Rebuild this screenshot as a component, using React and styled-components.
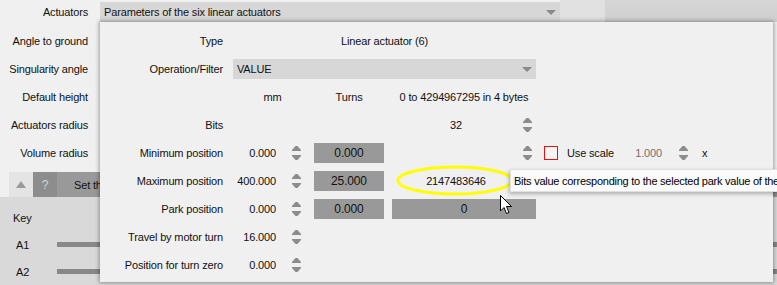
import React from "react";
import styled, { createGlobalStyle } from "styled-components";

const GlobalStyle = createGlobalStyle`
  body {
    margin: 0;
    background: #f0f0f0;
    font-family: "Liberation Sans", Arial, sans-serif;
    font-size: 11px;
    letter-spacing: -0.15px;
    color: #111;
  }
`;

const Screen = styled.div`
  position: relative;
  width: 777px;
  height: 285px;
  overflow: hidden;
  background: #f0f0f0;
`;

// ---- background form ----

const Form = styled.div`
  display: flex;
  flex-direction: column;
  height: 100%;
`;

const TopRow = styled.div`
  display: flex;
  height: 22px;
  margin-bottom: 5px;
`;

const FormRow = styled.div`
  display: flex;
  align-items: center;
  height: 28px;
`;

const FormLabel = styled.div`
  width: 88px;
  padding-right: 12px;
  text-align: right;
  white-space: nowrap;
  align-self: center;
  margin-top: ${(p) => (p.$top ? "2px" : "0")};
`;

const Combo = styled.div`
  display: flex;
  align-items: center;
  justify-content: space-between;
  width: ${(p) => p.$width}px;
  height: 20px;
  padding: 0 4px;
  box-sizing: border-box;
  background: #d7d7d7;
  align-self: ${(p) => (p.$top ? "flex-end" : "center")};
  grid-column: ${(p) => p.$span || "auto"};
`;

const Strip = styled.div`
  width: ${(p) => (p.$width ? `${p.$width}px` : "auto")};
  flex: ${(p) => (p.$width ? "none" : "1")};
  background: ${(p) => p.$bg};
`;

const Toolbar = styled.div`
  display: flex;
  height: 25px;
  margin-top: 5px;
  padding-left: 9px;
`;

const ToolButton = styled.div`
  display: flex;
  align-items: center;
  justify-content: ${(p) => (p.$wide ? "flex-start" : "center")};
  width: ${(p) => (p.$wide ? "auto" : "24px")};
  flex: ${(p) => (p.$wide ? "1" : "none")};
  padding-left: ${(p) => (p.$wide ? "17px" : "0")};
  background: ${(p) => p.$bg};
  color: ${(p) => p.$fg || "#111"};
  font-size: ${(p) => (p.$wide ? "11px" : "12px")};
`;

const KeyPanel = styled.div`
  flex: 1;
  background: #d9d9d9;
  padding-top: 7px;
`;

const KeyRow = styled.div`
  display: flex;
  align-items: center;
  height: 27px;
  padding-left: ${(p) => (p.$indent ? "16px" : "13px")};
`;

const KeyName = styled.span`
  width: 41px;
`;

const KeyLine = styled.div`
  flex: 1;
  height: 5px;
  background: #888;
`;

// ---- popup ----

const Popup = styled.div`
  position: absolute;
  left: 100px;
  top: 22px;
  width: 673px;
  height: 260px;
  background: #f0f0f0;
  box-shadow: 0 0 4px 1px rgba(0, 0, 0, 0.35);
  padding-top: 5px;
  box-sizing: border-box;
`;

const Grid = styled.div`
  display: grid;
  grid-template-columns: 125px 73px 70px 144px 1fr;
  grid-auto-rows: 28px;
  column-gap: 8px;
  align-items: center;
`;

const Label = styled.div`
  grid-column: 1;
  text-align: right;
  padding-right: 2px;
  white-space: nowrap;
`;

const Centered = styled.div`
  grid-column: ${(p) => p.$span || "auto"};
  text-align: center;
  white-space: nowrap;
  padding-left: ${(p) => p.$pl || 0}px;
`;

const NumField = styled.div`
  display: flex;
  align-items: center;
`;

const NumValue = styled.span`
  width: ${(p) => p.$width || 43}px;
  text-align: ${(p) => p.$align || "right"};
  color: ${(p) => (p.$muted ? "#707070" : "inherit")};
`;

const GrayBox = styled.div`
  height: 20px;
  display: flex;
  align-items: center;
  justify-content: center;
  background: #999;
  color: #111;
  font-size: 12px;
`;

const Cell = styled.div`
  display: flex;
  align-items: center;
  justify-content: ${(p) => p.$justify || "flex-start"};
  padding-right: ${(p) => p.$pr || 0}px;
`;

const Check = styled.div`
  width: 12px;
  height: 12px;
  border: 1px solid #e81010;
  background: #f4f4f4;
  margin-right: 9px;
`;

const Tooltip = styled.div`
  position: absolute;
  left: 510px;
  top: 169px;
  height: 21px;
  padding: 0 3px;
  display: flex;
  align-items: center;
  background: #fbfbfb;
  border: 1px solid #e0e0e0;
  box-shadow: -1px 2px 4px rgba(0, 0, 0, 0.28);
  white-space: nowrap;
  color: #000;
  letter-spacing: -0.25px;
`;

const Overlay = styled.svg`
  position: absolute;
  left: ${(p) => p.$x}px;
  top: ${(p) => p.$y}px;
  pointer-events: none;
`;

const Spin = ({ ml = 0 }) => (
  <svg width="9" height="14" viewBox="0 0 9 14" style={{ marginLeft: ml, flex: "none" }}>
    <polygon points="3.5,0 5.5,0 9,4 9,5 0,5 0,4" fill="#8c8c8c" />
    <polygon points="0,9 9,9 9,10 5.5,14 3.5,14 0,10" fill="#8c8c8c" />
  </svg>
);

const Arrow = () => (
  <svg width="10" height="5" viewBox="0 0 10 5">
    <polygon points="0,0 10,0 5,5" fill="#8a8a8a" />
  </svg>
);

const Number = ({ value }) => (
  <NumField>
    <NumValue>{value}</NumValue>
    <Spin ml={16} />
  </NumField>
);

const rows = [
  ["Minimum position", "0.000"],
  ["Maximum position", "400.000"],
  ["Park position", "0.000"],
  ["Travel by motor turn", "16.000"],
  ["Position for turn zero", "0.000"],
];

export default function App() {
  return (
    <Screen>
      <GlobalStyle />
      <Form>
        <TopRow>
          <FormLabel $top>Actuators</FormLabel>
          <Combo $width={460} $top>
            <span>Parameters of the six linear actuators</span>
            <Arrow />
          </Combo>
          <Strip $width={45} $bg="#e1e1e1" />
          <Strip $bg="linear-gradient(#d6d6d6, #cfcfcf)" />
        </TopRow>
        {["Angle to ground", "Singularity angle", "Default height", "Actuators radius", "Volume radius"].map(
          (l) => (
            <FormRow key={l}>
              <FormLabel>{l}</FormLabel>
            </FormRow>
          )
        )}
        <Toolbar>
          <ToolButton $bg="#e4e4e4" $fg="#9a9a9a">
            <svg width="10" height="7" viewBox="0 0 10 7">
              <polygon points="5,0 10,7 0,7" fill="#9a9a9a" />
            </svg>
          </ToolButton>
          <ToolButton $bg="#8d8d8d" $fg="#d4d4d4">?</ToolButton>
          <ToolButton $bg="#999" $wide>Set the</ToolButton>
        </Toolbar>
        <KeyPanel>
          <KeyRow>Key</KeyRow>
          <KeyRow $indent>
            <KeyName>A1</KeyName>
            <KeyLine />
          </KeyRow>
          <KeyRow $indent>
            <KeyName>A2</KeyName>
            <KeyLine />
          </KeyRow>
        </KeyPanel>
      </Form>

      <Popup>
        <Grid>
          <Label>Type</Label>
          <Centered $span="2 / 5">Linear actuator (6)</Centered>
          <div />

          <Label>Operation/Filter</Label>
          <Combo $span="2 / 5">
            <span>VALUE</span>
            <Arrow />
          </Combo>
          <div />

          <Label />
          <Centered $pl={6}>mm</Centered>
          <Centered>Turns</Centered>
          <Centered>0 to 4294967295 in 4 bytes</Centered>
          <div />

          <Label>Bits</Label>
          <div />
          <div />
          <Cell>
            <NumValue $width={128} $align="center">32</NumValue>
            <Spin ml={3} />
          </Cell>
          <div />

          <Label>{rows[0][0]}</Label>
          <Number value={rows[0][1]} />
          <GrayBox>0.000</GrayBox>
          <Cell $justify="flex-end" $pr={4}>
            <Spin />
          </Cell>
          <Cell>
            <Check />
            <NumValue $width={60} $align="left">Use scale</NumValue>
            <NumValue $width={35} $muted>1.000</NumValue>
            <Spin ml={17} />
            <span style={{ marginLeft: 14 }}>x</span>
          </Cell>

          <Label>{rows[1][0]}</Label>
          <Number value={rows[1][1]} />
          <GrayBox>25.000</GrayBox>
          <Cell>
            <NumValue $width={128} $align="center">2147483646</NumValue>
          </Cell>
          <div />

          <Label>{rows[2][0]}</Label>
          <Number value={rows[2][1]} />
          <GrayBox>0.000</GrayBox>
          <GrayBox>0</GrayBox>
          <div />

          <Label>{rows[3][0]}</Label>
          <Number value={rows[3][1]} />
          <div />
          <div />
          <div />

          <Label>{rows[4][0]}</Label>
          <Number value={rows[4][1]} />
        </Grid>
      </Popup>

      <Overlay $x={396} $y={165} width="118" height="31" viewBox="0 0 118 31">
        <ellipse cx="59" cy="15.5" rx="57" ry="13.5" fill="none" stroke="#ffff00" strokeWidth="3" />
      </Overlay>

      <Tooltip>Bits value corresponding to the selected park value of the actuator</Tooltip>

      <Overlay $x={500} $y={195} width="13" height="20" viewBox="0 0 13 20">
        <path d="M0.5 0.5 L0.5 16 L4 12.5 L6.5 18.5 L9 17.5 L6.5 11.5 L11.5 11.5 Z" fill="#fff" stroke="#000" strokeWidth="1" strokeLinejoin="round" />
      </Overlay>
    </Screen>
  );
}
